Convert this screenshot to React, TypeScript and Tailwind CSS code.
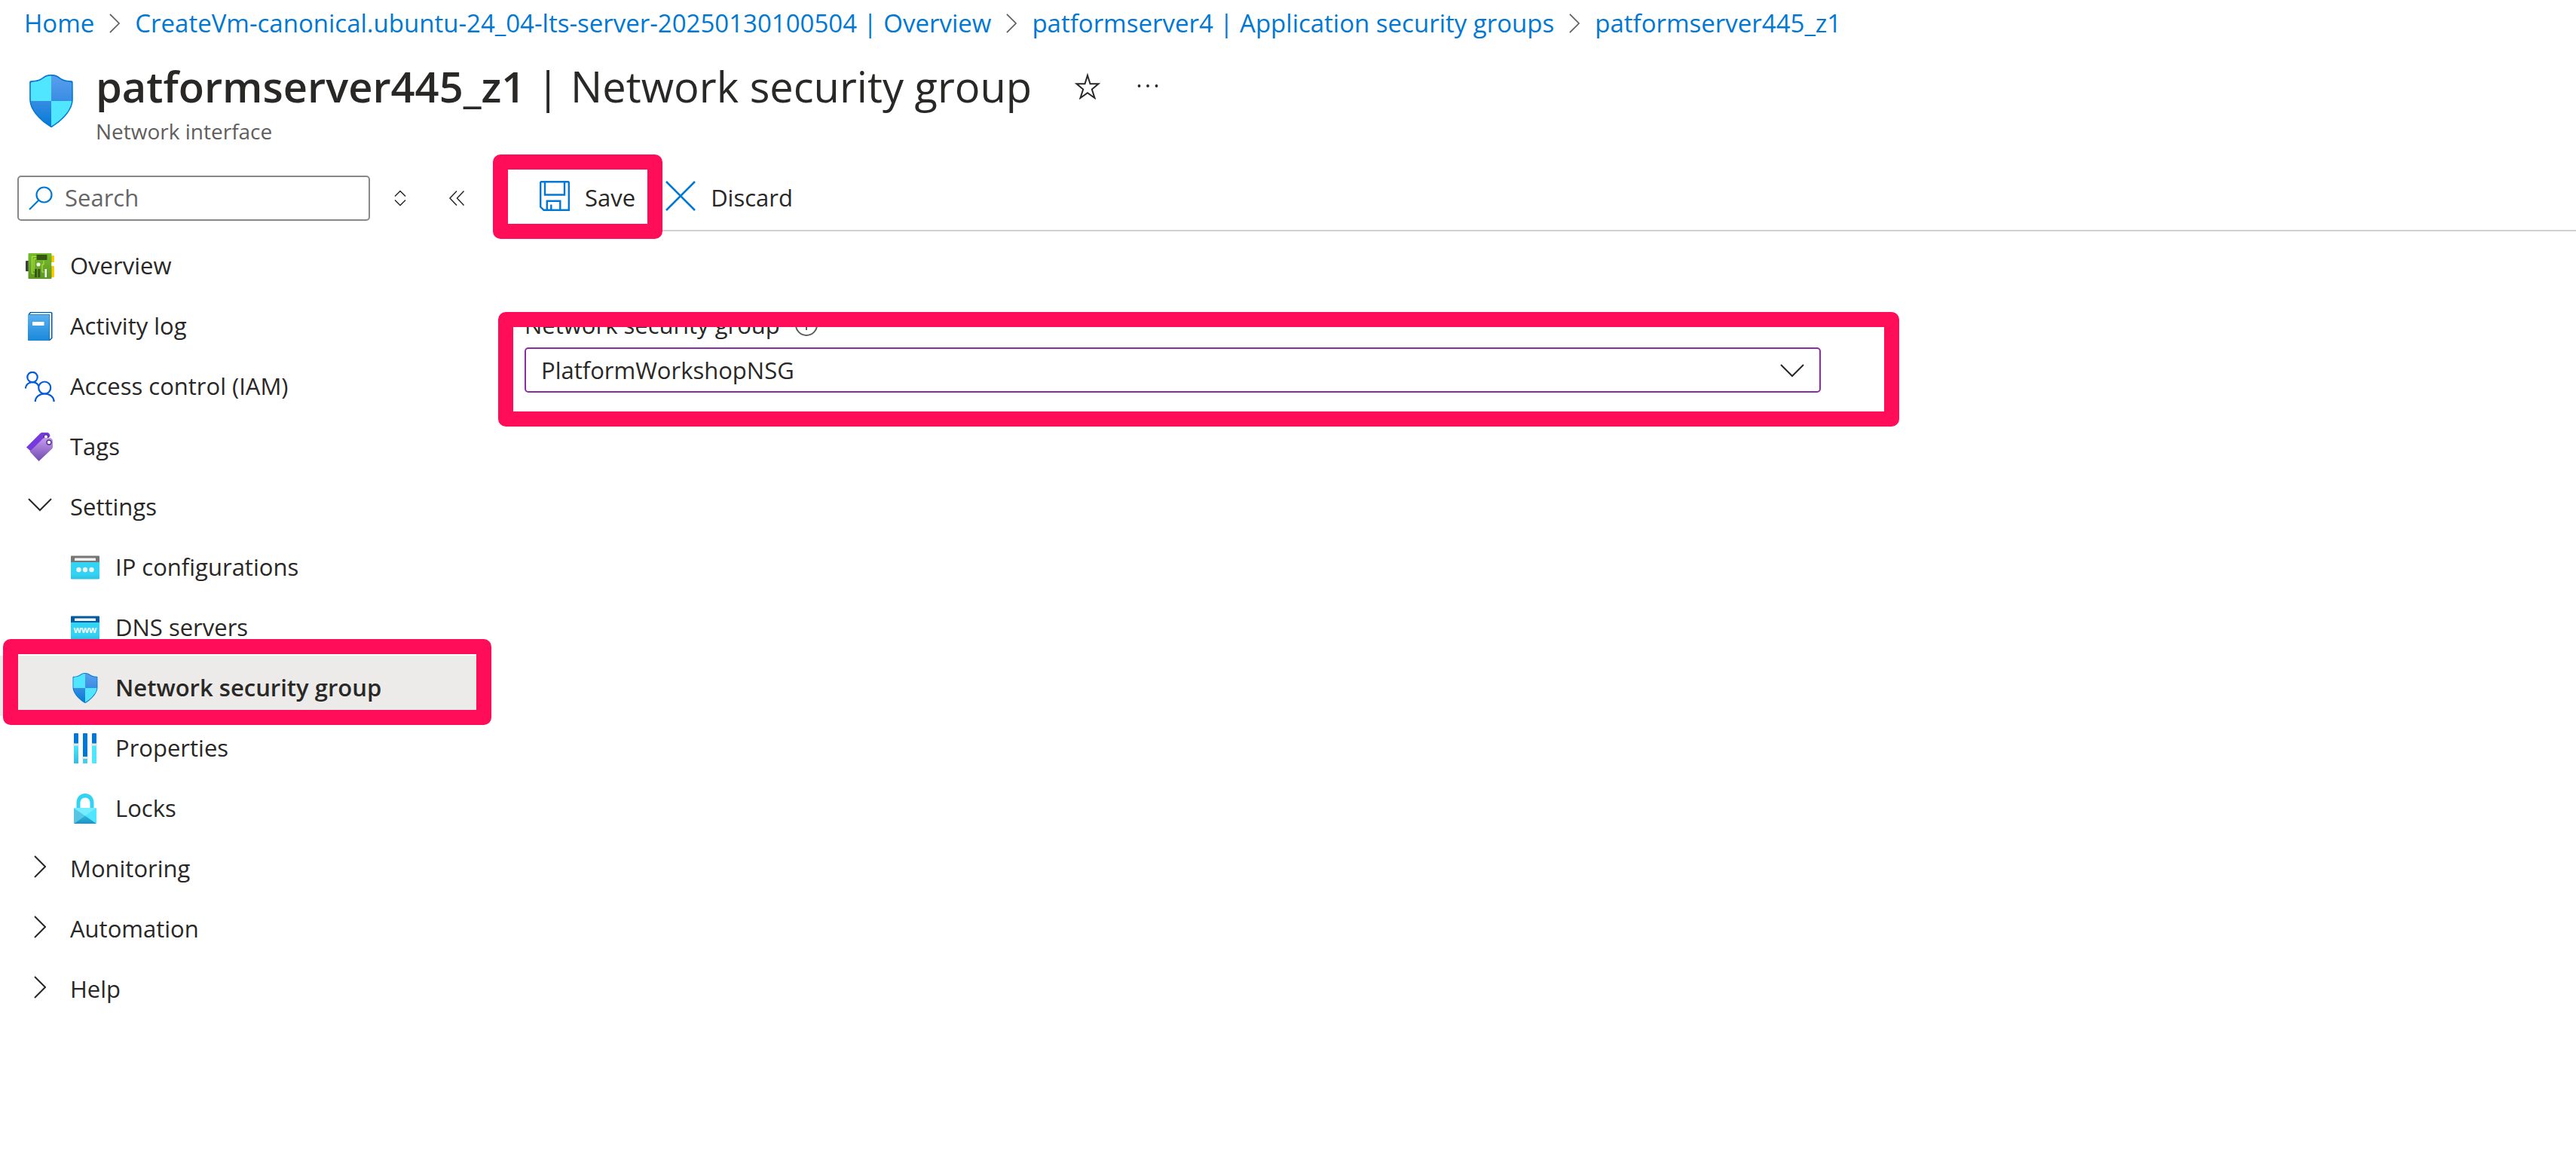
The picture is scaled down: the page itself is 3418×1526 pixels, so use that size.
import type { ReactNode } from "react";

type IconProps = { className?: string };

const Shield = ({ id, className }: IconProps & { id: string }) => (
  <svg viewBox="0.5 0.5 17 17" className={className} aria-hidden="true">
    <defs>
      <linearGradient id={`${id}-blue`} x1="0" y1="0" x2="0" y2="1">
        <stop offset="0" stopColor="#5ea0ef" />
        <stop offset="0.45" stopColor="#3c8fe4" />
        <stop offset="1" stopColor="#0078d4" />
      </linearGradient>
      <clipPath id={`${id}-clip`}>
        <path d="M15.6 8.5c0 4.3-5.2 7.8-6.4 8.5a.4.4 0 0 1-.4 0C7.6 16.3 2.4 12.8 2.4 8.5V3.3a.42.42 0 0 1 .4-.4C6.9 2.8 6 .95 9 .95s2.1 1.85 6.2 1.95a.42.42 0 0 1 .4.4z" />
      </clipPath>
    </defs>
    <path
      d="M16 8.44c0 4.57-5.53 8.25-6.73 9a.43.43 0 0 1-.46 0C7.57 16.69 2 13 2 8.44v-5.5a.44.44 0 0 1 .43-.43C6.77 2.39 5.77.5 9 .5s2.23 1.89 6.53 2a.44.44 0 0 1 .43.44z"
      fill="#0078d4"
    />
    <g clipPath={`url(#${id}-clip)`}>
      <rect x="9" y="0" width="7.5" height="18" fill={`url(#${id}-blue)`} />
      <rect x="1.5" y="0" width="7.5" height="18" fill={`url(#${id}-blue)`} />
      <rect x="1.5" y="0" width="7.5" height="9" fill="#50e6ff" />
      <rect x="9" y="9" width="7.5" height="9" fill="#50e6ff" />
    </g>
  </svg>
);

const Board = () => (
  <svg viewBox="0 0 40 40" className="size-10" aria-hidden="true">
    <defs>
      <linearGradient id="board" x1="0" y1="0" x2="0" y2="1">
        <stop offset="0" stopColor="#76bc2d" />
        <stop offset="1" stopColor="#5e9624" />
      </linearGradient>
    </defs>
    <rect x="1" y="13" width="5" height="14" rx="1" fill="#3d3d3d" />
    <rect x="34" y="6" width="5" height="9" rx="1" fill="#ffca00" />
    <rect x="34" y="20" width="5" height="15" rx="1" fill="#ffca00" />
    <rect x="4.500" y="3" width="31" height="34" rx="1" fill="url(#board)" />
    <path d="M16 7.5H9.5v22.5H13M16 10.500H12v16h2M25 13v5h-2v10h2.500" fill="none" stroke="#b4ec36" strokeWidth="1" />
    <rect x="15.500" y="5" width="14" height="7" fill="#365615" />
    <rect x="13" y="24" width="3" height="11" fill="#365615" />
    <rect x="17.300" y="24" width="3" height="11" fill="#365615" />
    <rect x="26.500" y="24" width="2.500" height="11" fill="#f2f2f2" />
    <circle cx="18" cy="18" r="2.500" fill="#f2f2f2" />
    <rect x="35.500" y="15" width="2" height="5" fill="#fff" />
  </svg>
);

const Book = () => (
  <svg viewBox="0 0 40 40" className="size-10" aria-hidden="true">
    <defs>
      <linearGradient id="book" x1="0" y1="0" x2="0" y2="1">
        <stop offset="0" stopColor="#5ab0f2" />
        <stop offset="1" stopColor="#1988d9" />
      </linearGradient>
    </defs>
    <path d="M7 1h28a1.500 1.500 0 0 1 1.500 1.500V36L33 39H4.500V4z" fill="#005ba1" />
    <path d="M8 2.300h26.500l.5.500v32.500l-2 2V4H6.500z" fill="#fff" />
    <path d="M4 4.500h28.500V39H5a1 1 0 0 1-1-1z" fill="url(#book)" />
    <rect x="10" y="14" width="15.500" height="5" rx="0.500" fill="#fff" />
  </svg>
);

const People = () => (
  <svg viewBox="0 0 40 40" className="size-10" fill="none" stroke="#005cdb" strokeWidth="2.200" aria-hidden="true">
    <circle cx="10" cy="7.500" r="6.700" />
    <circle cx="26.200" cy="21.500" r="8" />
    <path d="M1 22.500c0-5 4-8.300 9-8.300 3.800 0 7 1.800 8.300 5.300M13.800 40c0-6.500 5.700-10.500 12.400-10.500S38.600 33.500 38.600 40" />
  </svg>
);

const Tags = () => (
  <svg viewBox="0 0 40 40" className="size-10" aria-hidden="true">
    <defs>
      <linearGradient id="tag" x1="0" y1="0" x2="0" y2="1">
        <stop offset="0" stopColor="#c79aeb" />
        <stop offset="1" stopColor="#6f4bb2" />
      </linearGradient>
    </defs>
    <path d="M2 20.500 20.500 2q1-1 2.200-1H30q3 .5 3.500 5L8 26z" fill="#773adc" />
    <circle cx="28" cy="6.500" r="2.800" fill="#fff" stroke="#552f99" strokeWidth="1.400" />
    <path d="M6.500 26.200 24 9q1-1 2.300-1h7.500q3.200 1 3.200 4.500V20q0 1.400-1 2.400L18.600 39z" fill="url(#tag)" />
    <circle cx="32" cy="14" r="3" fill="#fff" stroke="#552f99" strokeWidth="1.400" />
  </svg>
);

const WindowIcon = ({ id, bar, children }: { id: string; bar: string; children: ReactNode }) => (
  <svg viewBox="0 0 40 40" className="size-10" aria-hidden="true">
    <defs>
      <linearGradient id={id} x1="0" y1="0" x2="0" y2="1">
        <stop offset="0.700" stopColor="#32d4f5" />
        <stop offset="1" stopColor="#32bedd" />
      </linearGradient>
    </defs>
    <path d="M1 12h38v22.500a1 1 0 0 1-1 1H2a1 1 0 0 1-1-1z" fill={`url(#${id})`} />
    <path d="M2 4.500h36a1 1 0 0 1 1 1V13H1V5.500a1 1 0 0 1 1-1z" fill={bar} />
    <rect x="6" y="7.500" width="28" height="3.500" rx="0.600" fill="#f2f2f2" />
    {children}
  </svg>
);

const Sliders = () => (
  <svg viewBox="0 0 40 40" className="size-10" aria-hidden="true">
    <defs>
      <linearGradient id="slider" x1="0" y1="0" x2="0" y2="1">
        <stop offset="0" stopColor="#50e6ff" />
        <stop offset="1" stopColor="#32bedd" />
      </linearGradient>
    </defs>
    <rect x="5" y="15" width="6" height="25" rx="0.600" fill="url(#slider)" />
    <rect x="17" y="33" width="6" height="7" rx="0.600" fill="#42cfee" />
    <rect x="29" y="15" width="6" height="25" rx="0.600" fill="#50e6ff" />
    <rect x="5" y="0" width="6" height="14" rx="0.800" fill="#0078d4" />
    <rect x="17" y="0" width="6" height="32" rx="0.800" fill="#0078d4" />
    <rect x="29" y="0" width="6" height="14" rx="0.800" fill="#0078d4" />
    <rect x="4" y="13.500" width="8" height="3" rx="0.600" fill="#e6e6e6" />
    <rect x="16" y="31" width="8" height="3" rx="0.600" fill="#e6e6e6" />
    <rect x="28" y="13.500" width="8" height="3" rx="0.600" fill="#e6e6e6" />
  </svg>
);

const Lock = () => (
  <svg viewBox="0 0 40 40" className="size-10" aria-hidden="true">
    <defs>
      <linearGradient id="lock-base" x1="0" y1="0" x2="0" y2="1">
        <stop offset="0" stopColor="#2fb4da" />
        <stop offset="1" stopColor="#1a94c4" />
      </linearGradient>
    </defs>
    <path d="M8.500 20v-7.500C8.500 5 13 0 20 0s11.500 5 11.500 12.500V20h-5v-7.500C26.500 8.500 24 5.500 20 5.500s-6.500 3-6.500 7V20z" fill="#32d4f5" />
    <rect x="5" y="19" width="30" height="21" rx="1.200" fill="#50e6ff" />
    <path d="M5 20v19q0 .6.500 .8L20 29.500z" fill="#5ac4e2" />
    <path d="M5.500 19.200 20 29.500 34.500 19.200q-.5-.2-1-.2h-27z" fill="#76ecff" />
    <path d="M5.500 39.700 20 29.500 34.500 39.700q-.4.300-.8.300H6.300q-.5 0-.8-.3z" fill="url(#lock-base)" />
  </svg>
);

const ChevronRight = ({ className }: IconProps) => (
  <svg viewBox="0 0 16 30" className={className} fill="none" stroke="currentColor" strokeWidth="2" aria-hidden="true">
    <path d="M1 1l14 14L1 29" />
  </svg>
);

const ChevronDown = ({ className }: IconProps) => (
  <svg viewBox="0 0 32 18" className={className} fill="none" stroke="currentColor" strokeWidth="2" aria-hidden="true">
    <path d="M1 1l15 15L31 1" />
  </svg>
);

const IconCell = ({ children }: { children: ReactNode }) => (
  <span className="flex w-10 shrink-0 justify-center pt-1.5">{children}</span>
);

const Caption = ({ children }: { children: ReactNode }) => <span className="whitespace-nowrap pt-1">{children}</span>;

const Highlight = ({ className }: { className: string }) => (
  <span className={`pointer-events-none absolute z-10 rounded-[10px] border-[20px] border-[#ff0d59] ${className}`} aria-hidden="true" />
);

const topItems = [
  { label: "Overview", icon: <Board /> },
  { label: "Activity log", icon: <Book /> },
  { label: "Access control (IAM)", icon: <People /> },
  { label: "Tags", icon: <Tags /> },
];

const settingsItems = [
  {
    label: "IP configurations",
    icon: (
      <WindowIcon id="ip-window" bar="#767676">
        <circle cx="11.500" cy="23" r="3.200" fill="#f2f2f2" />
        <circle cx="20" cy="23" r="3.200" fill="#f2f2f2" />
        <circle cx="28.500" cy="23" r="3.200" fill="#f2f2f2" />
      </WindowIcon>
    ),
  },
  {
    label: "DNS servers",
    icon: (
      <WindowIcon id="dns-window" bar="#005ba1">
        <text x="20" y="27" textAnchor="middle" fontSize="13" fontWeight="700" fontFamily="Liberation Sans, sans-serif" fill="#fff">
          www
        </text>
      </WindowIcon>
    ),
  },
  { label: "Network security group", icon: <Shield id="nav-shield" className="size-10" />, selected: true },
  { label: "Properties", icon: <Sliders /> },
  { label: "Locks", icon: <Lock /> },
];

const closedGroups = ["Monitoring", "Automation", "Help"];

const crumbs = [
  "Home",
  "CreateVm-canonical.ubuntu-24_04-lts-server-20250130100504 | Overview",
  "patformserver4 | Application security groups",
  "patformserver445_z1",
];

function Breadcrumbs() {
  return (
    <nav aria-label="Breadcrumb" className="flex h-[62px] items-center px-8">
      <ol className="flex items-center gap-5 whitespace-nowrap text-[33px] text-[#0078d4]">
        {crumbs.map((crumb, i) => (
          <li key={crumb} className="flex items-center gap-5">
            {i > 0 && <ChevronRight className="h-[26px] w-[14px] text-[#605e5c]" />}
            <a href="#">{crumb}</a>
          </li>
        ))}
      </ol>
    </nav>
  );
}

function PageHeader() {
  return (
    <header className="mt-3 flex items-center whitespace-nowrap pl-[33px]">
      <Shield id="title-shield" className="size-[70px]" />
      <div className="ml-6">
        <div className="flex items-center">
          <h1 className="text-[56px] leading-[80px]">
            <strong className="font-semibold">patformserver445_z1</strong> | Network security group
          </h1>
          <button type="button" aria-label="Add to favorites" className="ml-14">
            <svg viewBox="0 0 36 36" className="size-9" fill="none" stroke="currentColor" strokeWidth="2">
              <path d="M18 4l3.500 11.300h11l-8.700 7.200L27.500 34 18 27.200 8.500 34l3.700-11.500-8.700-7.200h11z" />
            </svg>
          </button>
          <button type="button" aria-label="More" className="ml-12">
            <svg viewBox="0 0 28 6" className="h-1.5 w-7" fill="currentColor">
              <circle cx="2.500" cy="3" r="1.900" />
              <circle cx="14" cy="3" r="1.900" />
              <circle cx="25.500" cy="3" r="1.900" />
            </svg>
          </button>
        </div>
        <p className="text-[28px] leading-10 text-[#605e5c]">Network interface</p>
      </div>
    </header>
  );
}

function Sidebar() {
  return (
    <aside className="w-[656px] shrink-0 pt-[39px]">
      <div className="flex items-center pl-[23px]">
        <div className="flex h-[60px] w-[468px] items-center rounded-[5px] border-2 border-[#8a8886] pl-[13px]">
          <svg viewBox="0 0 32 32" className="size-8 shrink-0" fill="none" stroke="#0078d4" strokeWidth="2.200" aria-hidden="true">
            <circle cx="20.500" cy="11.500" r="10" />
            <path d="M13.500 18.500 1 31" />
          </svg>
          <input
            type="search"
            aria-label="Search"
            placeholder="Search"
            className="ml-4 h-full w-full min-w-0 bg-transparent pb-0.5 outline-none placeholder:text-[#666]"
          />
        </div>
        <button type="button" aria-label="Expand or collapse all" className="ml-8">
          <svg viewBox="0 0 16 22" className="h-[22px] w-4" fill="none" stroke="currentColor" strokeWidth="1.500">
            <path d="M1 8.500 8 1.500l7 7M1 13.500l7 7 7-7" />
          </svg>
        </button>
        <button type="button" aria-label="Collapse menu" className="ml-14">
          <svg viewBox="0 0 22 22" className="size-[22px]" fill="none" stroke="currentColor" strokeWidth="1.500">
            <path d="M11 1.500 2 11l9 9.500M20.500 1.500 11.500 11l9 9.500" />
          </svg>
        </button>
      </div>

      <nav aria-label="Resource menu" className="mt-[17px]">
        <ul>
          {topItems.map((item) => (
            <li key={item.label}>
              <a href="#" className="flex h-20 items-center gap-5 pl-[33px]">
                <IconCell>{item.icon}</IconCell>
                <Caption>{item.label}</Caption>
              </a>
            </li>
          ))}
          <li>
            <button type="button" aria-expanded="true" className="flex h-20 w-full items-center gap-5 pl-[33px]">
              <span className="flex w-10 justify-center">
                <ChevronDown className="h-[18px] w-8" />
              </span>
              <Caption>Settings</Caption>
            </button>
            <ul>
              {settingsItems.map((item) => (
                <li key={item.label} className="relative w-[640px]">
                  <a
                    href="#"
                    className={`flex h-20 items-center gap-5 pl-[93px] ${item.selected ? "bg-[#edebe9] font-semibold" : ""}`}
                    aria-current={item.selected ? "page" : undefined}
                  >
                    <IconCell>{item.icon}</IconCell>
                    <Caption>{item.label}</Caption>
                  </a>
                  {item.selected && <Highlight className="-top-[22px] -right-3 -bottom-3 left-1" />}
                </li>
              ))}
            </ul>
          </li>
          {closedGroups.map((label) => (
            <li key={label}>
              <button type="button" aria-expanded="false" className="flex h-20 w-full items-center gap-5 pl-[33px]">
                <span className="flex w-10 justify-center">
                  <ChevronRight className="h-[30px] w-4" />
                </span>
                <Caption>{label}</Caption>
              </button>
            </li>
          ))}
        </ul>
      </nav>
    </aside>
  );
}

function Toolbar() {
  return (
    <div role="toolbar" className="mt-5 flex h-[93px] items-center border-b-2 border-[#d1d1d1] pl-10">
      <div className="relative">
        <button type="button" className="flex h-[60px] items-center gap-5 px-5">
          <svg viewBox="0 0 40 40" className="size-10" fill="none" stroke="#0078d4" strokeWidth="2.400" aria-hidden="true">
            <path d="M1.200 2.200a1 1 0 0 1 1-1h35.600a1 1 0 0 1 1 1v36.600H5.500l-4.300-4.300zM7 1.500v17h26v-17M9.800 38.500V26.800h17.500v11.700M15.300 31.500V38" />
          </svg>
          <Caption>Save</Caption>
        </button>
        <Highlight className="-top-[25px] -right-4 -bottom-[27px] -left-[42px]" />
      </div>
      <button type="button" className="flex h-[60px] items-center gap-5 px-5">
        <svg viewBox="0 0 40 40" className="size-10" fill="none" stroke="#0078d4" strokeWidth="2.600" aria-hidden="true">
          <path d="M1 1l38 38M39 1 1 39" />
        </svg>
        <Caption>Discard</Caption>
      </button>
    </div>
  );
}

function GroupField() {
  return (
    <div className="pt-[104px] pr-[104px] pl-10">
      <div className="relative w-full max-w-[1720px]">
        <div className="flex items-center gap-5">
          <label htmlFor="nsg" className="leading-10">
            Network security group
          </label>
          <svg viewBox="0 0 30 30" className="size-[30px]" fill="none" stroke="#605e5c" strokeWidth="2" aria-hidden="true">
            <circle cx="15" cy="15" r="14" />
            <path d="M15 12v10M15 7v2.500" />
          </svg>
        </div>
        <div className="relative mt-2.5">
          <select id="nsg" className="h-[60px] w-full appearance-none rounded-[5px] border-2 border-[#8a2da5] bg-white pl-5 outline-none">
            <option>PlatformWorkshopNSG</option>
          </select>
          <ChevronDown className="pointer-events-none absolute top-[22px] right-[22px] h-[18px] w-8" />
        </div>
        <Highlight className="top-[3px] -right-[104px] -bottom-[45px] -left-[35px]" />
      </div>
    </div>
  );
}

export default function App() {
  return (
    <div className="min-h-screen bg-white font-['Open_Sans','Noto_Sans',sans-serif] text-[31px] leading-10 text-[#292827]">
      <Breadcrumbs />
      <PageHeader />
      <div className="flex">
        <Sidebar />
        <main className="min-w-0 flex-1">
          <Toolbar />
          <GroupField />
        </main>
      </div>
    </div>
  );
}
